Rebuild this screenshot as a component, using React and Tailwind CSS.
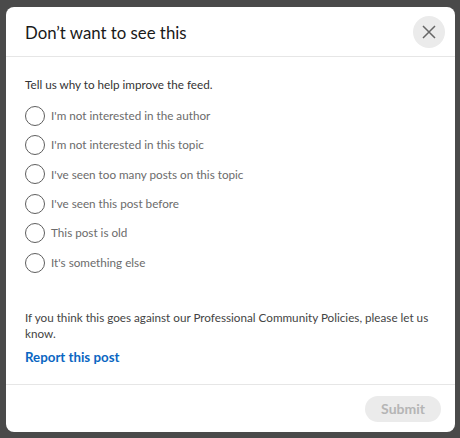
import React, { useState } from 'react';

const reasons = [
  "I'm not interested in the author",
  "I'm not interested in this topic",
  "I've seen too many posts on this topic",
  "I've seen this post before",
  'This post is old',
  "It's something else",
];

const App = () => {
  const [selected, setSelected] = useState(null);

  return (
    <div className="w-[460px] h-[438px] bg-[#4a4a4a] pt-[7px] pl-[6px] pr-[5px] pb-[6px] font-['Lato',sans-serif]">
      <div className="h-full bg-white rounded-lg flex flex-col">
        <div className="flex items-center justify-between pl-[19px] pr-[10px] h-[50px] border-b border-[#e6e6e6]">
          <h1 className="text-[16.8px] text-[#191919] mt-[2px]">Don’t want to see this</h1>
          <button className="w-8 h-8 rounded-full bg-[#ebebeb] flex items-center justify-center text-[#666]">
            <svg width="16" height="16" viewBox="0 0 16 16" fill="none" stroke="currentColor" strokeWidth="1.5">
              <path d="M2 2l12 12M14 2L2 14" />
            </svg>
          </button>
        </div>

        <div className="flex-1 pl-[19px] pr-3 pt-[18px]">
          <p className="text-[11.7px] text-[#333] leading-[18px]">Tell us why to help improve the feed.</p>
          <div className="mt-[8px] flex flex-col">
            {reasons.map((r, i) => (
              <label key={i} className="flex items-center h-[29.4px] cursor-pointer" onClick={() => setSelected(i)}>
                <span className="w-5 h-5 rounded-full border-[1.3px] border-[#5e5e5e] flex items-center justify-center">
                  {selected === i && <span className="w-2.5 h-2.5 rounded-full bg-[#0a66c2]" />}
                </span>
                <span className="ml-[6px] text-[11.7px] text-[#6b6b6b]">{r}</span>
              </label>
            ))}
          </div>
          <p className="mt-[32px] text-[11.7px] text-[#444] leading-[16px]">
            If you think this goes against our Professional Community Policies, please let us know.
          </p>
          <a href="#" className="block mt-[7px] text-[13.3px] font-bold text-[#0a66c2]">Report this post</a>
        </div>

        <div className="border-t border-[#e6e6e6] h-[48px] flex items-center justify-end pr-[14px]">
          <button className="h-[26px] px-[16px] rounded-full bg-[#ebebeb] text-[#b5b5b5] text-[14px] font-bold">Submit</button>
        </div>
      </div>
    </div>
  );
};

export default App;
